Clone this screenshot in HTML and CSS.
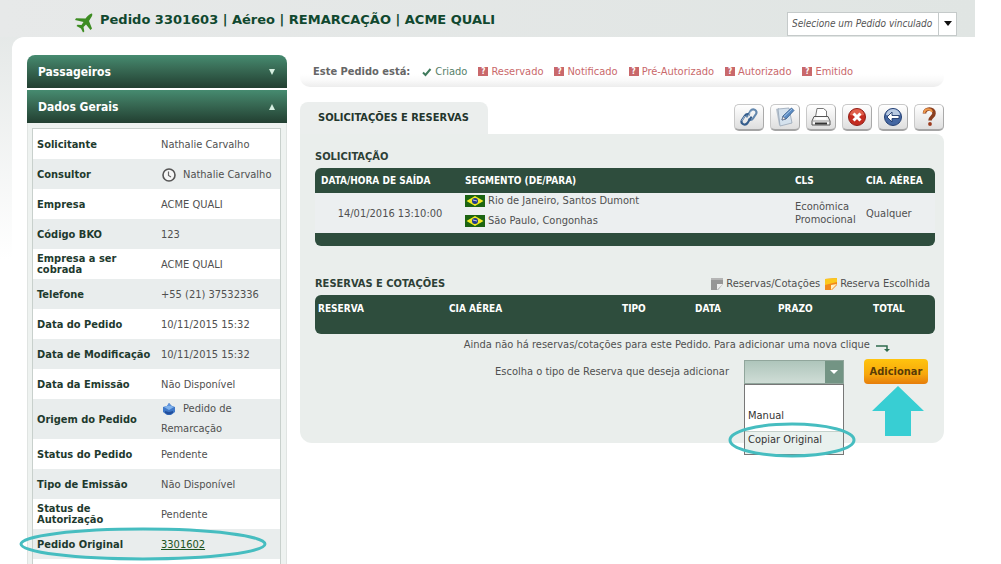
FILE: index.html
```html
<!DOCTYPE html>
<html lang="pt-BR">
<head>
<meta charset="utf-8">
<title>Pedido 3301603</title>
<link rel="stylesheet" href="styles.css">
</head>
<body>
<div class="page">
  <header class="topbar">
    <svg class="plane" viewBox="0 0 18 20" aria-hidden="true"><path d="M17 .5c.8 1 0 3-1.500 5L14 8l3 7.500-1.500 1.500L11 11.500 8.500 14l.8 4.500-1.300 1-2-4L1.500 13l1-1.300L6.500 12l2-3L0 7l1-1.700 9.500.2C13 2.500 15.500 0 17 .5z" fill="#3d8c22"/></svg>
    <h1 class="title">Pedido 3301603 | Aéreo | REMARCAÇÃO | ACME QUALI</h1>
    <div class="combo">
      <input class="combo-input" type="text" aria-label="Pedido vinculado" placeholder="Selecione um Pedido vinculado">
      <button class="combo-button" type="button" aria-label="Abrir lista"><svg width="8" height="5" viewBox="0 0 8 5"><path d="M0 0h8L4 5z" fill="#111"/></svg></button>
    </div>
  </header>
  <div class="content">
    <aside class="sidebar">
      <button class="accordion accordion-first" type="button">Passageiros<svg width="8" height="6" viewBox="0 0 8 6"><path d="M1 0h6L4 6z" fill="#d5eee0"/></svg></button>
      <button class="accordion" type="button">Dados Gerais<svg width="8" height="6" viewBox="0 0 8 6"><path d="M1 6h6L4 0z" fill="#d5eee0"/></svg></button>
      <div class="details-frame">
        <table class="details">
          <tr><th scope="row">Solicitante</th><td>Nathalie Carvalho</td></tr>
          <tr><th scope="row">Consultor</th><td><svg class="value-icon" viewBox="0 0 14 14"><circle cx="7" cy="7" r="6" fill="#f5f6f6" stroke="#555" stroke-width="1.6"/><path d="M6.500 3.500V7.500L9 9" fill="none" stroke="#666" stroke-width="1.200"/></svg>Nathalie Carvalho</td></tr>
          <tr><th scope="row">Empresa</th><td>ACME QUALI</td></tr>
          <tr><th scope="row">Código BKO</th><td>123</td></tr>
          <tr><th scope="row">Empresa a ser cobrada</th><td>ACME QUALI</td></tr>
          <tr><th scope="row">Telefone</th><td>+55 (21) 37532336</td></tr>
          <tr><th scope="row">Data do Pedido</th><td>10/11/2015 15:32</td></tr>
          <tr><th scope="row">Data de Modificação</th><td>10/11/2015 15:32</td></tr>
          <tr><th scope="row">Data da Emissão</th><td>Não Disponível</td></tr>
          <tr><th scope="row">Origem do Pedido</th><td class="two-lines"><svg class="value-icon" viewBox="0 0 14 14"><path d="M1 5l4-1 2-3 3 3 3 1v5l-4 3H5l-4-3z" fill="#3f78c8"/><path d="M2 5l5-2 5 2-5 3z" fill="#80b2ec"/><path d="M3 9l4 1 4-1v2l-3 1.500H6L3 11z" fill="#234f9c"/><path d="M5 4l2-3 2 3z" fill="#5f94dc"/></svg>Pedido de Remarcação</td></tr>
          <tr><th scope="row">Status do Pedido</th><td>Pendente</td></tr>
          <tr><th scope="row">Tipo de Emissão</th><td>Não Disponível</td></tr>
          <tr><th scope="row">Status de Autorização</th><td>Pendente</td></tr>
          <tr class="marked-row"><th scope="row">Pedido Original<svg class="ring ring-row" viewBox="0 0 248 34"><ellipse cx="124" cy="17" rx="122" ry="15" fill="none" stroke="#46bdc0" stroke-width="3"/></svg></th><td><a href="#pedido">3301602</a></td></tr>
          <tr><th></th><td></td></tr>
        </table>
      </div>
    </aside>
    <main class="main">
      <div class="status">
        <strong class="status-label">Este Pedido está:</strong>
        <span class="step done"><svg viewBox="0 0 10 10"><path d="M1 5.500L3.500 8 8.500 2" fill="none" stroke="#3f7a5c" stroke-width="2"/></svg>Criado</span>
        <span class="step"><i class="mark">?</i>Reservado</span>
        <span class="step"><i class="mark">?</i>Notificado</span>
        <span class="step"><i class="mark">?</i>Pré-Autorizado</span>
        <span class="step"><i class="mark">?</i>Autorizado</span>
        <span class="step"><i class="mark">?</i>Emitido</span>
      </div>
      <div class="tabs">
        <h2 class="tab">SOLICITAÇÕES E RESERVAS</h2>
        <div class="tools">
          <button class="tool" type="button" aria-label="Vincular"><svg viewBox="0 0 20 20"><g fill="none" stroke-linecap="round"><path d="M8 9.500L11.500 4c2.500-3.500 7.500-.5 5.500 3L14 11.500c-1 1.500-2.500 1.800-4 1" stroke="#6488ae" stroke-width="2.200"/><path d="M12 10.500L8.500 16c-2.500 3.500-7.500.5-5.500-3L6 8.500c1-1.500 2.500-1.800 4-1" stroke="#355d8c" stroke-width="2.200"/><path d="M9.500 8.500l3-4.500M5.500 9.500L3 13.500" stroke="#c6d9ec" stroke-width=".8"/></g></svg></button>
          <button class="tool" type="button" aria-label="Editar"><svg viewBox="0 0 20 20"><path d="M1 2l3-1 2 16-2 1z" fill="#b9c3ce"/><path d="M3 2l11-1 3 15-12 3z" fill="#d5e2ee" stroke="#98a6b6" stroke-width=".8"/><path d="M7 13l1-4 8.500-8L19 3.500 11 12z" fill="#5b8cc4" stroke="#2d5789" stroke-width=".8"/><path d="M9 9.500l8-7.500" stroke="#a8c8ea"/><path d="M7 13l1-3.500L10.500 12z" fill="#eee" stroke="#556" stroke-width=".5"/></svg></button>
          <button class="tool" type="button" aria-label="Imprimir"><svg viewBox="0 0 20 20"><path d="M4.500 10L6 1.500h6.500l3 2.500V10" fill="#fff" stroke="#777"/><path d="M3 9.500h14l2 4.500v4H1v-4z" fill="#f3f3f3" stroke="#555"/><path d="M1.500 14h17" stroke="#999"/><path d="M4 15.500h12v2H4z" fill="#333"/><path d="M5 10.500h10v2H5z" fill="#fff"/></svg></button>
          <button class="tool" type="button" aria-label="Cancelar"><svg viewBox="0 0 20 20"><circle cx="10" cy="10" r="8.500" fill="#c42c20" stroke="#8f1f18"/><path d="M3 8a7 6 0 0 1 14 0q-7 2-14 0" fill="#e0604c"/><path d="M6.500 6.500l7 7M13.500 6.500l-7 7" stroke="#fff" stroke-width="3"/></svg></button>
          <button class="tool" type="button" aria-label="Voltar"><svg viewBox="0 0 20 20"><circle cx="10" cy="10" r="8.500" fill="#4567a2" stroke="#233f73"/><path d="M3 8a7 6 0 0 1 14 0q-7 2-14 0" fill="#b9cae2"/><path d="M4 10l5-5v3.500h7v3H9V15z" fill="#fff" stroke="#1f3a6b" stroke-width=".9"/></svg></button>
          <button class="tool" type="button" aria-label="Ajuda"><svg viewBox="0 0 20 20"><path d="M5.500 6.500c0-6 10-6 9.500 0 0 3-4 3.500-4 7" fill="none" stroke="#8a3f20" stroke-width="3.600"/><path d="M5 6c1-5 7-4.500 8-1" fill="none" stroke="#f09a4c" stroke-width="2"/><circle cx="11" cy="17" r="1.900" fill="#9c3a1d"/></svg></button>
        </div>
      </div>
      <section class="panel">
        <h3 class="heading">SOLICITAÇÃO</h3>
        <table class="grid">
          <colgroup><col class="c-date"><col><col class="c-class"><col class="c-airline"></colgroup>
          <thead><tr><th>DATA/HORA DE SAÍDA</th><th>SEGMENTO (DE/PARA)</th><th>CLS</th><th>CIA. AÉREA</th></tr></thead>
          <tbody><tr>
            <td class="centered">14/01/2016 13:10:00</td>
            <td>
              <div class="place"><svg class="flag" viewBox="0 0 20 12"><path d="M0 0h20v12H0z" fill="#1c6412"/><path d="M1.500 6L10 1l8.500 5L10 11z" fill="#f2ea20"/><circle cx="10" cy="6" r="3" fill="#20398f"/><path d="M8 5l4 1" stroke="#ccd"/></svg>Rio de Janeiro, Santos Dumont</div>
              <div class="place"><svg class="flag" viewBox="0 0 20 12"><path d="M0 0h20v12H0z" fill="#1c6412"/><path d="M1.500 6L10 1l8.500 5L10 11z" fill="#f2ea20"/><circle cx="10" cy="6" r="3" fill="#20398f"/><path d="M8 5l4 1" stroke="#ccd"/></svg>São Paulo, Congonhas</div>
            </td>
            <td>Econômica Promocional</td>
            <td>Qualquer</td>
          </tr></tbody>
        </table>
        <div class="grid-foot"></div>
        <div class="heading-row">
          <h3 class="heading">RESERVAS E COTAÇÕES</h3>
          <div class="legend">
            <span class="legend-item"><svg viewBox="0 0 14 13"><path d="M1 0h12v6l-5 6H1z" fill="#969696"/><path d="M7 12V6h6z" fill="#eee"/><path d="M1 0h12v2H1z" fill="#b5b5b5"/></svg>Reservas/Cotações</span>
            <span class="legend-item"><svg viewBox="0 0 14 13"><path d="M1 1l12-1v7l-5 5H1z" fill="#f18a1c"/><path d="M1 1l12-1v4L1 7z" fill="#fbc81e"/><path d="M7 12V7l6-1z" fill="#fff1c4"/></svg>Reserva Escolhida</span>
          </div>
        </div>
        <table class="grid quotes">
          <colgroup><col class="q-reserve"><col><col class="q-type"><col class="q-date"><col class="q-due"><col class="q-total"></colgroup>
          <thead><tr><th>RESERVA</th><th>CIA AÉREA</th><th>TIPO</th><th>DATA</th><th>PRAZO</th><th>TOTAL</th></tr></thead>
        </table>
        <p class="hint">Ainda não há reservas/cotações para este Pedido. Para adicionar uma nova clique <svg class="hint-arrow" viewBox="0 0 14 8"><path d="M0 2h11v4" fill="none" stroke="#2f6b4c" stroke-width="1.500"/><path d="M8 5h6l-3 3z" fill="#2f6b4c"/></svg></p>
        <div class="add-row">
          <label for="kind">Escolha o tipo de Reserva que deseja adicionar</label>
          <div class="select-wrap">
            <select class="select" id="kind"><option></option><option>Manual</option><option>Copiar Original</option></select>
            <span class="select-arrow"><svg width="8" height="4" viewBox="0 0 8 4"><path d="M0 0h8L4 4z" fill="#fff"/></svg></span>
            <ul class="menu">
              <li></li><li>Manual</li><li class="active">Copiar Original</li>
            </ul>
            <svg class="ring ring-menu" viewBox="0 0 128 36"><ellipse cx="64" cy="18" rx="62" ry="16" fill="none" stroke="#46bdc0" stroke-width="3"/></svg>
          </div>
          <div class="add-wrap">
            <button class="add" type="button">Adicionar</button>
            <svg class="pointer" viewBox="0 0 52 50"><path d="M26 0l26 25H39v25H13V25H0z" fill="#38ced3"/></svg>
          </div>
        </div>
      </section>
    </main>
  </div>
</div>
</body>
</html>
```
FILE: styles.css
```css
* { box-sizing: border-box; }
body {
  margin: 0;
  background: #fff;
  color: #505050;
  font: 11px/20px "DejaVu Sans Condensed", "Noto Sans", sans-serif;
}
h1, h2, h3, p, ul { margin: 0; padding: 0; }
button, input, select { font: inherit; }
svg { flex: none; }
.page {
  display: flex;
  flex-direction: column;
  height: 100vh;
  margin-right: 26px;
  overflow: hidden;
  background: linear-gradient(#e1e5e4, #fff 260px);
}
.topbar {
  display: flex;
  flex: none;
  align-items: center;
  height: 37px;
  padding: 3px 18px 0 75px;
  background: linear-gradient(90deg, #e7e9e9, #e0e5e3);
}
.plane { width: 18px; height: 20px; margin: 6px 7px 0 0; }
.title { color: #10482f; font: bold 13px/20px "DejaVu Sans", sans-serif; }
.combo {
  display: flex;
  width: 170px;
  height: 24px;
  margin: 7px 0 0 auto;
  border: 1px solid #c5caca;
  background: #fff;
}
.combo-input { width: 150px; padding: 0 0 0 4px; border: 0; background: none; font-size: 10px; font-style: italic; }
.combo-input::placeholder { color: #555; opacity: 1; }
.combo-button {
  display: flex;
  flex: 1;
  align-items: center;
  justify-content: center;
  padding: 0;
  border: 0;
  border-left: 1px solid #c5caca;
  background: none;
}
.content {
  display: flex;
  flex: 1;
  gap: 13px;
  min-height: 0;
  margin-left: 12px;
  padding: 18px 31px 0 15px;
  border-radius: 12px 0 0 0;
  background: #fff;
}
.sidebar { display: flex; flex: none; flex-direction: column; width: 260px; }
.accordion {
  display: flex;
  flex: none;
  align-items: center;
  justify-content: space-between;
  height: 33px;
  margin-bottom: 2px;
  padding: 0 11px;
  border: 0;
  background: linear-gradient(#468b70, #396c56 40%, #223f31);
  color: #fff;
  font-size: 12px;
  font-weight: bold;
}
.accordion-first { border-radius: 8px 8px 0 0; }
.accordion + .accordion { margin-bottom: 0; }
.details-frame { flex: 1; padding: 5px 5px 0 4px; border: solid #e0e4e2; border-width: 0 1px; background: #eef2f0; }
.details { width: 100%; border: 1px solid #c8d0cc; border-bottom: 0; border-spacing: 0; table-layout: fixed; background: #fff; }
.details th, .details td { height: 30px; padding: 0 4px; text-align: left; vertical-align: middle; }
.details td { padding-top: 2px; }
.details .two-lines { padding-top: 0; }
.details th { width: 124px; padding-right: 0; color: #1e3a2e; line-height: 11px; }
.details tr:nth-child(even) { background: #e9eded; }
.details a { color: #1c5321; }
.marked-row { position: relative; }
.value-icon { width: 14px; height: 14px; margin: 0 7px 0 1px; vertical-align: -4px; }
.ring { position: absolute; pointer-events: none; }
.ring-row { top: -2px; left: -14px; width: 248px; height: 34px; }
.main { flex: 1; min-width: 0; }
.status {
  display: flex;
  align-items: center;
  height: 32px;
  padding: 1px 13px 0;
  border-radius: 0 0 10px 10px;
  background: linear-gradient(#fff 60%, #f9f9f9 80%, #ededed);
}
.status-label { margin-right: 12px; color: #666; }
.step { display: flex; align-items: center; gap: 3px; margin-right: 11px; color: #c9686b; }
.step svg { width: 10px; height: 10px; }
.done { color: #568069; }
.mark {
  width: 10px;
  height: 9px;
  background: #c9686b;
  color: #fff;
  font: bold 8px/9px "DejaVu Sans Condensed", sans-serif;
  text-align: center;
}
.tabs { display: flex; align-items: flex-end; justify-content: space-between; margin-top: 15px; }
.tab {
  padding: 6px 19px 6px 18px;
  border-radius: 8px 8px 0 0;
  background: #ebeeed;
  color: #23352c;
  font-size: 11px;
}
.tools { display: flex; gap: 6px; padding-bottom: 3px; }
.tool {
  display: flex;
  align-items: center;
  justify-content: center;
  width: 30px;
  height: 27px;
  padding: 0;
  border: 1px solid #c9c9c9;
  border-right-color: #aaa;
  border-bottom: 2px solid #a5a5a5;
  border-radius: 5px;
  background: linear-gradient(#fff, #dedede);
}
.tool svg { width: 20px; height: 20px; }
.panel { min-height: 309px; padding: 13px 9px 0 15px; border-radius: 0 8px 12px 12px; background: #eaeeec; }
.heading { color: #2d4036; font-size: 11px; }
.grid { width: 100%; margin-top: 1px; border-spacing: 0; table-layout: fixed; }
.grid th { height: 25px; padding: 0 0 0 6px; background: #2e4d3d; color: #fff; font-size: 10px; text-align: left; }
.grid th:first-child { border-top-left-radius: 6px; }
.grid th:last-child { border-top-right-radius: 6px; }
.grid th + th, .grid td + td { padding-left: 0; }
.grid td { height: 40px; padding: 0; background: #eceff0; line-height: 13px; }
.c-date { width: 150px; }
.c-class { width: 71px; }
.c-airline { width: 69px; }
.centered { text-align: center; }
.place { display: flex; gap: 3px; height: 20px; line-height: 16px; }
.flag { width: 20px; height: 12px; margin-top: 2px; }
.grid-foot { height: 13px; border-radius: 0 0 6px 6px; background: #2e4d3d; }
.heading-row { display: flex; justify-content: space-between; margin-top: 28px; }
.legend { display: flex; gap: 4px; padding-right: 5px; }
.legend-item { display: flex; align-items: center; gap: 2px; }
.legend-item svg { width: 14px; height: 13px; }
.quotes { margin-top: 1px; }
.quotes th { height: 39px; padding: 4px 0 0 3px; line-height: 20px; vertical-align: top; }
.quotes th:first-child { border-bottom-left-radius: 6px; }
.quotes th:last-child { border-bottom-right-radius: 6px; }
.q-reserve { width: 134px; }
.q-type { width: 73px; }
.q-date { width: 83px; }
.q-due { width: 95px; }
.q-total { width: 62px; }
.hint { margin-top: 1px; padding-right: 45px; text-align: right; }
.hint-arrow { width: 14px; height: 8px; margin-left: 3px; vertical-align: -4px; }
.add-row { display: flex; align-items: center; justify-content: flex-end; margin-top: 4px; padding-right: 7px; }
.select-wrap { position: relative; width: 100px; margin: 0 20px 0 15px; }
.select {
  display: block;
  width: 100%;
  height: 24px;
  border: 1px solid #91a69c;
  border-radius: 0;
  appearance: none;
  background: linear-gradient(#aec5bb, #cfddd6);
}
.select-arrow {
  position: absolute;
  top: 1px;
  right: 1px;
  display: flex;
  align-items: center;
  justify-content: center;
  width: 18px;
  height: 22px;
  background: #739484;
  pointer-events: none;
}
.menu {
  position: absolute;
  top: 24px;
  left: 0;
  width: 100px;
  border: 1px solid #777;
  background: #fff;
  list-style: none;
}
.menu li { height: 23px; padding: 0 3px; line-height: 16px; color: #333; }
.menu .active { border-top: 1px solid #c5d2cc; background: #e9f1ee; }
.ring-menu { top: 62px; left: -16px; width: 128px; height: 36px; }
.add-wrap { position: relative; }
.add {
  display: block;
  min-width: 64px;
  height: 25px;
  padding: 0 5px;
  border: 0;
  border-radius: 4px;
  background: linear-gradient(#ffc40e, #f7a80c 60%, #e67d0b);
  color: #5a3b06;
  font-weight: bold;
}
.pointer { position: absolute; top: 27px; left: 8px; width: 52px; height: 50px; }
```
